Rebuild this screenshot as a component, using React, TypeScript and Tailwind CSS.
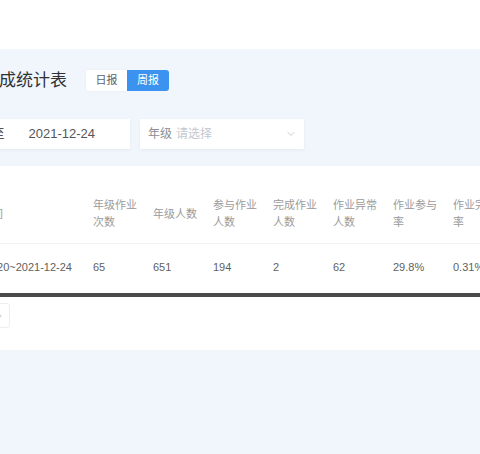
import React from 'react';
import { ChevronDown, ChevronRight } from 'lucide-react';

const headers = [
  ['年级作业', '次数'],
  ['年级人数'],
  ['参与作业', '人数'],
  ['完成作业', '人数'],
  ['作业异常', '人数'],
  ['作业参与', '率'],
  ['作业完成', '率'],
];

const row = ['65', '651', '194', '2', '62', '29.8%', '0.31%'];

const App: React.FC = () => {
  return (
    <div
      className="w-[480px] h-[454px] overflow-hidden bg-[#f1f6fd]"
      style={{ fontFamily: '"Liberation Sans", "Noto Sans CJK SC", sans-serif' }}
    >
      <div className="h-[49px] bg-white" />

      <div className="-ml-[70px] w-[600px]">
        {/* title + toggle */}
        <div className="flex items-center pl-[18px] pt-[21px]">
          <h1 className="text-[17px] leading-[21px] text-[#303133] whitespace-nowrap">作业完成统计表</h1>
          <div className="ml-[19px] flex h-[21px] text-[11px]">
            <button className="w-[41px] bg-white text-[#606266] rounded-l-[3px] shadow-[0_0_3px_rgba(0,0,0,0.05)]">日报</button>
            <button className="w-[42px] bg-[#3c93ef] text-white rounded-r-[3px]">周报</button>
          </div>
        </div>

        {/* filters */}
        <div className="flex mt-[28px] h-[30px]">
          <div className="w-[200px] bg-white flex items-center justify-end pr-[35px] text-[13px] text-[#555] shadow-[0_1px_3px_rgba(0,0,0,0.06)] whitespace-nowrap">
            <span>2021-12-20</span>
            <span className="mx-[24px]">至</span>
            <span>2021-12-24</span>
          </div>
          <div className="ml-[10px] w-[164px] bg-white flex items-center pl-[8px] pr-[7px] text-[12px] shadow-[0_1px_3px_rgba(0,0,0,0.06)]">
            <span className="text-[#8a8e96]">年级</span>
            <span className="ml-[4px] text-[#c3c7ce]">请选择</span>
            <ChevronDown size={12} className="ml-auto text-[#c8ccd2]" />
          </div>
        </div>

        {/* table card */}
        <div className="mt-[17px] bg-white h-[184px] pt-[19px]">
          <div className="flex h-[59px] items-center border-b border-[#f2f2f2] text-[11px] leading-[17px] text-[#9b9b9b]">
            <div className="w-[153px] flex justify-end pr-[80px]">时间</div>
            {headers.map((h, i) => (
              <div key={i} className="w-[60px] shrink-0 pl-[10px] whitespace-nowrap">
                {h.map((l, j) => (
                  <div key={j}>{l}</div>
                ))}
              </div>
            ))}
          </div>
          <div className="flex h-[47px] items-center text-[11px] text-[#5f5f5f]">
            <div className="w-[153px] pl-[23px] whitespace-nowrap">2021-12-20~2021-12-24</div>
            {row.map((v, i) => (
              <div key={i} className="w-[60px] shrink-0 pl-[10px] whitespace-nowrap">
                {v}
              </div>
            ))}
          </div>
          <div className="mt-[2px] h-[4px] bg-[#4a4a4a]" />
          <div className="mt-[6px] flex">
            <div className="w-[80px] h-[25px] border border-[#eeeeee] rounded-[3px] flex items-center justify-end pr-[4px] text-[#c0c0c0]">
              <ChevronRight size={10} />
            </div>
          </div>
        </div>
      </div>
    </div>
  );
};

export default App;
